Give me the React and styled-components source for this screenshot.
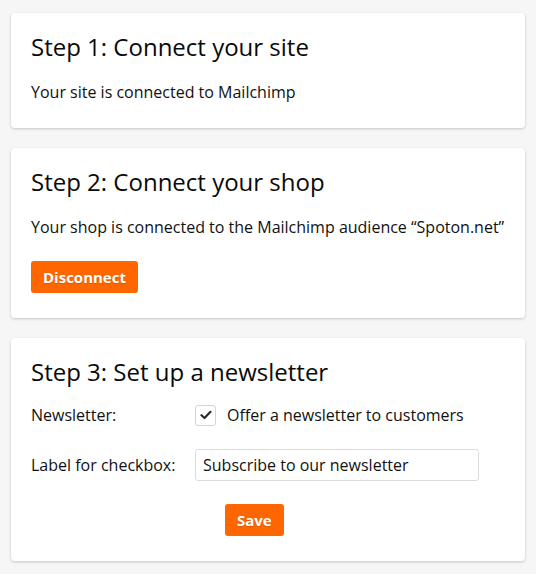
import React from "react";
import styled, { createGlobalStyle } from "styled-components";

const GlobalStyle = createGlobalStyle`
  body {
    margin: 0;
    background: #f6f6f6;
    font-family: "Open Sans", "Noto Sans", sans-serif;
    color: #111;
  }
`;

const Page = styled.div`
  display: flex;
  flex-direction: column;
  gap: 20px;
  padding: 13px 11px;
`;

const Card = styled.section`
  background: #fff;
  border-radius: 4px;
  box-shadow: 0 1px 3px rgba(0, 0, 0, 0.2);
  padding: 20px 20px 25px;
`;

const Title = styled.h2`
  margin: 0 0 ${(props) => props.gap || 19}px;
  font-size: 24px;
  font-weight: 400;
  line-height: 1.2;
  color: #0a0a0a;
`;

const Text = styled.p`
  margin: 0;
  font-size: 16px;
  line-height: 22px;
`;

const Actions = styled.div`
  margin-top: 23px;
`;

const Button = styled.button`
  height: 32px;
  padding: 0 12px;
  border: none;
  border-radius: 3px;
  background: #ff6600;
  color: #fff;
  font-family: inherit;
  font-size: 15px;
  font-weight: 700;
  text-shadow: 0 1px 1px rgba(0, 0, 0, 0.15);
  cursor: pointer;
`;

const Form = styled.div`
  display: grid;
  grid-template-columns: 164px 1fr;
  row-gap: 23px;
  align-items: center;
  font-size: 16px;
`;

const Label = styled.label`
  line-height: 22px;
`;

const CheckRow = styled.label`
  display: flex;
  align-items: center;
  gap: 11px;
  line-height: 22px;
`;

const CheckBox = styled.span`
  display: flex;
  align-items: center;
  justify-content: center;
  width: 21px;
  height: 21px;
  box-sizing: border-box;
  border: 1px solid #d4d4d4;
  border-radius: 3px;
  background: #fff;
`;

const Input = styled.input`
  width: 284px;
  height: 32px;
  box-sizing: border-box;
  padding: 0 7px;
  border: 1px solid #dcdcdc;
  border-radius: 3px;
  font-family: inherit;
  font-size: 16px;
  color: #111;
  outline: none;
`;

const SaveCell = styled.div`
  grid-column: 2;
  padding-left: 30px;
`;

const Check = () => (
  <svg width="12" height="10" viewBox="0 0 12 10">
    <path
      d="M1.5 5.2 L4.5 8 L10.5 1.8"
      fill="none"
      stroke="#2a2a2a"
      strokeWidth="2.2"
      strokeLinecap="round"
      strokeLinejoin="round"
    />
  </svg>
);

const App = () => {
  return (
    <React.Fragment>
      <GlobalStyle />
      <Page>
        <Card>
          <Title>Step 1: Connect your site</Title>
          <Text>Your site is connected to Mailchimp</Text>
        </Card>
        <Card>
          <Title>Step 2: Connect your shop</Title>
          <Text>Your shop is connected to the Mailchimp audience “Spoton.net”</Text>
          <Actions>
            <Button>Disconnect</Button>
          </Actions>
        </Card>
        <Card>
          <Title gap={18}>Step 3: Set up a newsletter</Title>
          <Form>
            <Label>Newsletter:</Label>
            <CheckRow>
              <CheckBox>
                <Check />
              </CheckBox>
              Offer a newsletter to customers
            </CheckRow>
            <Label htmlFor="label">Label for checkbox:</Label>
            <Input id="label" defaultValue="Subscribe to our newsletter" />
            <SaveCell>
              <Button>Save</Button>
            </SaveCell>
          </Form>
        </Card>
      </Page>
    </React.Fragment>
  );
};

export default App;
